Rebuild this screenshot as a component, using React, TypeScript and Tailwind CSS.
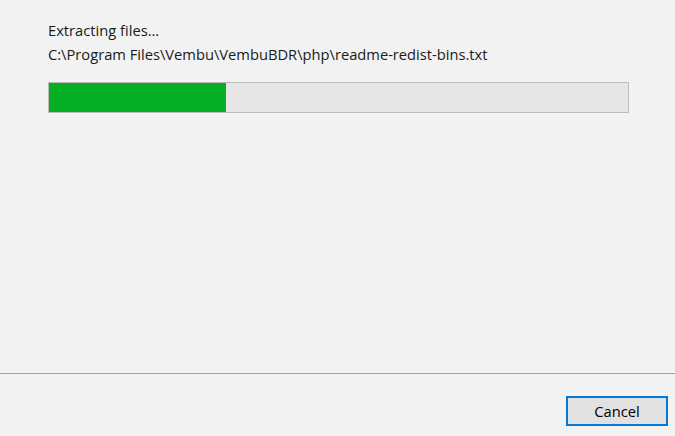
import React from "react";

const App = () => {
  const progress = 30.6;

  return (
    <div className="flex h-[436px] w-[675px] flex-col bg-[#f2f2f2] font-['Open_Sans','Liberation_Sans',sans-serif] text-[14.7px] text-[#1a1a1a]">
      <main className="flex-1 pl-[48px] pt-[18px]">
        <p className="leading-[24px]">Extracting files...</p>
        <p className="leading-[24px]">C:\Program Files\Vembu\VembuBDR\php\readme-redist-bins.txt</p>
        <div className="mt-[16px] h-[31px] w-[581px] border border-[#bcbcbc] bg-[#e6e6e6]">
          <div className="h-full bg-[#06b025]" style={{ width: `${progress}%` }} />
        </div>
      </main>
      <footer className="flex justify-end border-t border-[#a0a0a0] pb-[10px] pr-[7px] pt-[22px]">
        <button className="h-[30px] w-[102px] border-2 border-[#0078d7] bg-[#e1e1e1] text-[14.7px] leading-none text-black">
          Cancel
        </button>
      </footer>
    </div>
  );
};

export default App;
